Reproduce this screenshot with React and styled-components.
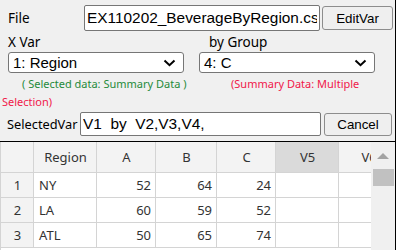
import styled, { createGlobalStyle } from "styled-components";

const GlobalStyle = createGlobalStyle`
  html, body {
    margin: 0;
    padding: 0;
    background: #f0f0f0;
  }
`;

const Page = styled.div`
  width: 396px;
  height: 250px;
  box-sizing: border-box;
  border-right: 1px solid #000;
  background: #f0f0f0;
  overflow: hidden;
  font-family: "Noto Sans", "Liberation Sans", sans-serif;
  color: #000;
`;

const Row = styled.div`
  display: flex;
  align-items: center;
  margin-top: ${(p) => p.$top || 0}px;
  padding-left: ${(p) => p.$left || 0}px;
`;

const Label = styled.div`
  width: ${(p) => p.$width}px;
  flex: none;
  font-size: ${(p) => p.$size || 13.5}px;
  line-height: 19px;
  white-space: nowrap;
`;

const TextBox = styled.input`
  box-sizing: border-box;
  width: ${(p) => p.$width}px;
  height: ${(p) => p.$height}px;
  margin: 0;
  padding: 0 2px;
  border: 1px solid #767676;
  border-radius: 2px;
  background: #fff;
  font-family: "Liberation Sans", Arial, sans-serif;
  font-size: 15.4px;
  color: #000;
  outline: none;
`;

const Button = styled.button`
  box-sizing: border-box;
  width: ${(p) => p.$width}px;
  height: ${(p) => p.$height}px;
  margin-left: ${(p) => p.$gap}px;
  padding: 0;
  border: 1px solid #8d8d8d;
  border-radius: 3px;
  background: #efefef;
  font-family: "Liberation Sans", Arial, sans-serif;
  font-size: 13.33px;
  color: #000;
`;

const SelectRow = styled.div`
  display: flex;
  gap: 15px;
  padding-left: 8px;
`;

const SelectBox = styled.div`
  position: relative;
  box-sizing: border-box;
  width: 176px;
  height: 21px;
  border: 1px solid #767676;
  border-radius: 3px;
  background: #fff;
  display: flex;
  align-items: center;
  padding-left: 4px;
  font-family: "Liberation Sans", Arial, sans-serif;
  font-size: 15px;
`;

const Chevron = styled.svg`
  position: absolute;
  right: 7px;
  top: 6px;
`;

const Notes = styled.div`
  margin-top: 2px;
  padding-left: 2px;
  font-size: 11px;
  line-height: 18px;
`;

const GreenNote = styled.span`
  display: inline-block;
  box-sizing: border-box;
  width: 229px;
  padding-left: 20px;
  color: #1f8a3a;
  white-space: nowrap;
`;

const RedNote = styled.span`
  color: #f0174a;
`;

const Grid = styled.div`
  margin-top: 5px;
  border-top: 1px solid #000;
  display: flex;
  height: 120px;
`;

const TableArea = styled.div`
  flex: 1;
  overflow: hidden;
  background: #fff;
  border-left: 1px solid #d4d4d4;
  font-size: 13px;
  color: #333;
`;

const GridRow = styled.div`
  display: grid;
  grid-template-columns: 33px 63px 59px 61px 59px 63px 60px;
  height: ${(p) => (p.$head ? 31 : 25)}px;
`;

const Cell = styled.div`
  box-sizing: border-box;
  border-right: 1px solid #d4d4d4;
  border-bottom: 1px solid #d4d4d4;
  background: ${(p) => p.$bg || "#fff"};
  display: flex;
  align-items: center;
  justify-content: ${(p) =>
    p.$align === "right" ? "flex-end" : p.$align === "left" ? "flex-start" : "center"};
  padding: 0 4px 0 5px;
  white-space: nowrap;
  overflow: hidden;
`;

const ScrollBar = styled.div`
  width: 24px;
  flex: none;
  background: #f0f0f0;
  display: flex;
  flex-direction: column;
  align-items: center;
`;

const Arrow = styled.div`
  margin-top: 11px;
  width: 0;
  height: 0;
  border-left: 6px solid transparent;
  border-right: 6px solid transparent;
  border-bottom: 6px solid #a3a3a3;
`;

const Thumb = styled.div`
  margin-top: 10px;
  width: 21px;
  height: 17px;
  background: #c1c1c1;
`;

const columns = ["Region", "A", "B", "C", "V5", "V6"];
const rows = [
  ["NY", 52, 64, 24],
  ["LA", 60, 59, 52],
  ["ATL", 50, 65, 74],
];

function ChevronIcon() {
  return (
    <Chevron width="13" height="8" viewBox="0 0 13 8">
      <path d="M1.5 1.5 L6.5 6.2 L11.5 1.5" fill="none" stroke="#000" strokeWidth="2" />
    </Chevron>
  );
}

export default function App() {
  return (
    <Page>
      <GlobalStyle />
      <Row $top={5} $left={8}>
        <Label $width={76}>File</Label>
        <TextBox $width={236} $height={26} defaultValue="EX110202_BeverageByRegion.csv" />
        <Button $width={71} $height={24} $gap={2}>EditVar</Button>
      </Row>
      <Row $top={2} $left={8}>
        <Label $width={201}>X Var</Label>
        <Label $width={100}>by Group</Label>
      </Row>
      <SelectRow>
        <SelectBox>
          1: Region
          <ChevronIcon />
        </SelectBox>
        <SelectBox>
          4: C
          <ChevronIcon />
        </SelectBox>
      </SelectRow>
      <Notes>
        <GreenNote>( Selected data: Summary Data )</GreenNote>
        <RedNote>(Summary Data: Multiple Selection)</RedNote>
      </Notes>
      <Row $top={1} $left={7}>
        <Label $width={73} $size={12.8}>SelectedVar</Label>
        <TextBox $width={241} $height={24} defaultValue="V1  by  V2,V3,V4," />
        <Button $width={68} $height={23} $gap={3}>Cancel</Button>
      </Row>
      <Grid>
        <TableArea>
          <GridRow $head>
            <Cell $bg="#f3f3f3" />
            {columns.map((c) => (
              <Cell key={c} $bg={c === "V5" ? "#dadada" : "#f3f3f3"}>
                {c}
              </Cell>
            ))}
          </GridRow>
          {rows.map((r, i) => (
            <GridRow key={i}>
              <Cell $bg="#f3f3f3">{i + 1}</Cell>
              <Cell $align="left">{r[0]}</Cell>
              <Cell $align="right">{r[1]}</Cell>
              <Cell $align="right">{r[2]}</Cell>
              <Cell $align="right">{r[3]}</Cell>
              <Cell />
              <Cell />
            </GridRow>
          ))}
        </TableArea>
        <ScrollBar>
          <Arrow />
          <Thumb />
        </ScrollBar>
      </Grid>
    </Page>
  );
}
